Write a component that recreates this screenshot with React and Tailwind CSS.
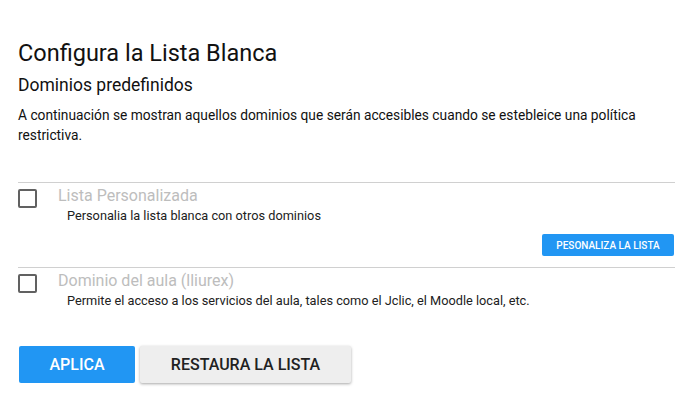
export default function App() {
  const font = { fontFamily: "Roboto, 'Liberation Sans', sans-serif" };
  return (
    <div className="w-[693px] h-[412px] bg-white px-[18px] pt-[37px] text-[#212121]" style={font}>
      <h1 className="text-[23.5px] leading-[32px] font-normal text-[#111]">Configura la Lista Blanca</h1>
      <h2 className="mt-[4px] text-[17.5px] leading-[24px] font-normal text-[#111]">Dominios predefinidos</h2>
      <p className="mt-[8px] text-[13.75px] leading-[20px] text-[#111]">
        A continuación se mostran aquellos dominios que serán accesibles cuando se estebleice una política restrictiva.
      </p>

      <div className="mt-[37px] border-t border-[#d0d0d0]">
        <div className="flex pt-[3px]">
          <div className="w-[19px] h-[19px] border-2 border-[#616161] rounded-[2px] mt-[3px] shrink-0" />
          <div className="ml-[21px]">
            <div className="text-[16px] leading-[20px] text-[#bdbdbd]">Lista Personalizada</div>
            <div className="ml-[9px] text-[12.75px] leading-[18px] mt-[1px]">Personalia la lista blanca con otros dominios</div>
          </div>
        </div>
        <div className="flex justify-end mt-[9px] mb-[11px]">
          <button className="w-[132px] h-[22px] bg-[#2196f3] text-white text-[10px] font-medium rounded-[2px] mr-[1px]">PESONALIZA LA LISTA</button>
        </div>
      </div>

      <div className="border-t border-[#d0d0d0]">
        <div className="flex pt-[3px]">
          <div className="w-[19px] h-[19px] border-2 border-[#616161] rounded-[2px] mt-[3px] shrink-0" />
          <div className="ml-[21px]">
            <div className="text-[16px] leading-[20px] text-[#bdbdbd]">Dominio del aula (lliurex)</div>
            <div className="ml-[9px] text-[12.75px] leading-[18px] mt-[1px]">Permite el acceso a los servicios del aula, tales como el Jclic, el Moodle local, etc.</div>
          </div>
        </div>
      </div>

      <div className="flex gap-[5px] mt-[36px] ml-[1px]">
        <button className="w-[116px] h-[37px] bg-[#2196f3] text-white text-[16px] font-medium rounded-[2px]">APLICA</button>
        <button className="w-[211px] h-[37px] bg-[#eeeeee] text-[#212121] text-[16px] font-medium rounded-[2px] shadow-[0_1px_3px_rgba(0,0,0,0.35)]">RESTAURA LA LISTA</button>
      </div>
    </div>
  );
}
